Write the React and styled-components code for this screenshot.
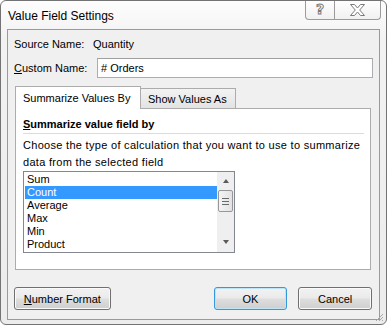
import React from 'react';
import styled, { createGlobalStyle } from 'styled-components';

const GlobalStyle = createGlobalStyle`
  html, body {
    margin: 0;
    padding: 0;
    background: #ffffff;
  }
  body {
    font-family: 'Liberation Sans', Arial, sans-serif;
    font-size: 11px;
    color: #000;
  }
`;

// Win7 basic style dialog frame
const Window = styled.div`
  position: relative;
  box-sizing: border-box;
  width: 387px;
  height: 325px;
  border: 1px solid #737373;
  border-radius: 6px;
  background: linear-gradient(to bottom, #fdfdfd 0%, #f2f2f2 12%, #ececec 100%);
  display: flex;
  flex-direction: column;
  overflow: hidden;
`;

const TitleBar = styled.div`
  height: 28px;
  flex: none;
  display: flex;
  align-items: flex-start;
  justify-content: space-between;
  padding: 0 5px 0 7px;
`;

const Title = styled.span`
  font-size: 12px;
  line-height: 28px;
  margin-top: 1px;
  color: #000;
`;

const CaptionButtons = styled.div`
  display: flex;
  margin-top: -1px;
`;

const CaptionButton = styled.div`
  box-sizing: border-box;
  width: ${p => p.$w}px;
  height: 20px;
  border: 1px solid #9b9b9b;
  border-top: none;
  border-left-width: ${p => (p.$first ? 1 : 0)}px;
  border-radius: ${p => (p.$first ? '0 0 0 4px' : '0 0 4px 0')};
  background: linear-gradient(to bottom, #ffffff, #f1f1f1);
  display: flex;
  align-items: center;
  justify-content: center;
`;

const HelpGlyph = styled.span`
  font-family: 'DejaVu Sans', sans-serif;
  font-weight: bold;
  font-size: 14px;
  line-height: 14px;
  color: #ffffff;
  -webkit-text-stroke: 1px #7a7a7a;
  margin-top: -1px;
`;

const Client = styled.div`
  flex: 1;
  margin: 0 6px 4px 6px;
  border: 1px solid #9a9a9a;
  background: #f0f0f0;
  display: flex;
  flex-direction: column;
  padding: 6px 7px 9px 6px;
`;

const FieldRow = styled.div`
  display: flex;
  align-items: center;
  height: ${p => p.$h}px;
  margin-bottom: ${p => p.$mb}px;
`;

const Label = styled.span`
  width: ${p => p.$w}px;
  flex: none;
  line-height: 16px;
`;

const TextBox = styled.div`
  box-sizing: border-box;
  flex: 1;
  height: 20px;
  margin-right: -1px;
  border: 1px solid #abadb3;
  border-top-color: #a0a0a0;
  background: #fff;
  padding: 0 3px;
  line-height: 18px;
`;

const TabRow = styled.div`
  display: flex;
  align-items: flex-end;
  height: 22px;
  margin: 0 1px;
`;

const Tab = styled.div`
  box-sizing: border-box;
  position: relative;
  width: ${p => p.$w}px;
  height: ${p => (p.$active ? 23 : 20)}px;
  margin-bottom: ${p => (p.$active ? -1 : 0)}px;
  margin-left: ${p => (p.$active ? 0 : -1)}px;
  z-index: ${p => (p.$active ? 1 : 0)};
  border: 1px solid #acacac;
  border-bottom: none;
  background: ${p => (p.$active ? '#ffffff' : 'linear-gradient(to bottom, #f3f3f3, #e3e3e3)')};
  padding: ${p => (p.$active ? '4px 0 0 7px' : '3px 0 0 7px')};
  line-height: 14px;
  white-space: nowrap;
`;

const Panel = styled.div`
  box-sizing: border-box;
  height: 162px;
  margin: 0 1px;
  border: 1px solid #acacac;
  background: #fff;
  padding: 8px 6px 0 7px;
  display: flex;
  flex-direction: column;
`;

const SectionHeading = styled.div`
  font-weight: bold;
  line-height: 15px;
  padding-bottom: 1px;
  border-bottom: 1px solid #dcdcdc;
  margin-bottom: 3px;
`;

const Description = styled.div`
  line-height: 16px;
  margin-bottom: 1px;
  letter-spacing: 0.3px;
  white-space: nowrap;
`;

const ListBox = styled.div`
  box-sizing: border-box;
  width: 212px;
  height: 82px;
  border: 1px solid #828790;
  display: flex;
  overflow: hidden;
`;

const Items = styled.div`
  flex: 1;
  padding: 1px 0 0 1px;
`;

const Item = styled.div`
  height: 13px;
  line-height: 13px;
  padding-left: 2px;
  background: ${p => (p.$selected ? '#3399ff' : 'transparent')};
  color: ${p => (p.$selected ? '#fff' : '#000')};
`;

const ScrollBar = styled.div`
  width: 17px;
  flex: none;
  background: #efefef;
  display: flex;
  flex-direction: column;
  align-items: center;
`;

const Arrow = styled.div`
  width: 0;
  height: 0;
  border-left: 3.5px solid transparent;
  border-right: 3.5px solid transparent;
  ${p => (p.$down ? 'border-top: 4px solid #5a5a5a;' : 'border-bottom: 4px solid #5a5a5a;')}
  margin: ${p => p.$m};
`;

const Thumb = styled.div`
  box-sizing: border-box;
  width: 15px;
  height: 22px;
  border: 1px solid #979797;
  border-radius: 2px;
  background: linear-gradient(to right, #f4f4f4, #e2e2e2);
  display: flex;
  flex-direction: column;
  align-items: center;
  justify-content: center;
  gap: 2px;
`;

const Grip = styled.div`
  width: 7px;
  height: 1px;
  background: #6a6a6a;
`;

const ButtonRow = styled.div`
  display: flex;
  align-items: center;
  margin-top: auto;
  gap: 11px;
`;

const Button = styled.button`
  box-sizing: border-box;
  width: ${p => p.$w}px;
  height: 23px;
  margin-right: ${p => p.$push || 0}px;
  padding: 0;
  font-family: inherit;
  font-size: 11px;
  color: #000;
  border: 1px solid ${p => (p.$default ? '#3398dc' : '#707070')};
  border-radius: 3px;
  background: linear-gradient(to bottom, #f2f2f2 0%, #ebebeb 45%, #dddddd 55%, #cfcfcf 100%);
  box-shadow: ${p => (p.$default ? 'inset 0 0 0 1px #bde4f7' : 'inset 0 0 0 1px #fafafa')};
`;

const Grip3 = styled.svg`
  position: absolute;
  right: 2px;
  bottom: 2px;
`;

const CloseIcon = () => (
  <svg width="15" height="12" viewBox="0 0 15 12">
    <polygon
      points="0.5,0.5 4.5,0.5 7.5,4 10.5,0.5 14.5,0.5 9.7,6 14.5,11.5 10.5,11.5 7.5,8 4.5,11.5 0.5,11.5 5.3,6"
      fill="#fff"
      stroke="#7a7a7a"
      strokeWidth="1"
    />
  </svg>
);

const calcs = ['Sum', 'Count', 'Average', 'Max', 'Min', 'Product'];

export default function App() {
  return (
    <>
      <GlobalStyle />
      <Window>
        <TitleBar>
          <Title>Value Field Settings</Title>
          <CaptionButtons>
            <CaptionButton $w={30} $first>
              <HelpGlyph>?</HelpGlyph>
            </CaptionButton>
            <CaptionButton $w={46}>
              <CloseIcon />
            </CaptionButton>
          </CaptionButtons>
        </TitleBar>

        <Client>
          <FieldRow $h={16} $mb={6}>
            <Label $w={79}>Source Name:</Label>
            <span>Quantity</span>
          </FieldRow>
          <FieldRow $h={20} $mb={8}>
            <Label $w={83}><u>C</u>ustom Name:</Label>
            <TextBox># Orders</TextBox>
          </FieldRow>

          <TabRow>
            <Tab $active $w={126}>Summarize Values By</Tab>
            <Tab $w={96}>Show Values As</Tab>
          </TabRow>
          <Panel>
            <SectionHeading><u>S</u>ummarize value field by</SectionHeading>
            <Description>Choose the type of calculation that you want to use to summarize</Description>
            <Description>data from the selected field</Description>
            <ListBox>
              <Items>
                {calcs.map(c => (
                  <Item key={c} $selected={c === 'Count'}>{c}</Item>
                ))}
              </Items>
              <ScrollBar>
                <Arrow $m="7px 0 7px" />
                <Thumb>
                  <Grip />
                  <Grip />
                  <Grip />
                </Thumb>
                <Arrow $down $m="auto 0 8px" />
              </ScrollBar>
            </ListBox>
          </Panel>

          <ButtonRow>
            <Button $w={97} $push={92}><u>N</u>umber Format</Button>
            <Button $w={74} $default>OK</Button>
            <Button $w={74}>Cancel</Button>
          </ButtonRow>
        </Client>

        <Grip3 width="10" height="10" viewBox="0 0 10 10">
          <path d="M9 2 L2 9 M9 5 L5 9 M9 8 L8 9" stroke="#a8a8a8" strokeWidth="1" />
        </Grip3>
      </Window>
    </>
  );
}
